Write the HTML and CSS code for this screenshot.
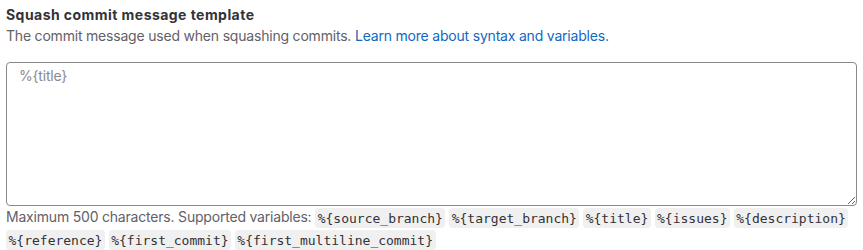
FILE: index.html
```html
<!DOCTYPE html>
<html lang="en">
<head>
    <meta charset="UTF-8">
    <title>Merge request settings</title>
    <link rel="stylesheet" href="styles.css">
</head>
<body>
    <div class="form-group">
        <label class="label-bold" for="squash-template">Squash commit message template</label>
        <p class="form-text">The commit message used when squashing commits. <a href="#">Learn more about syntax and variables.</a></p>
        <textarea id="squash-template" class="form-control" placeholder="%{title}"></textarea>
        <p class="help-text">
            Maximum 500 characters. Supported variables:
            <code>%{source_branch}</code>
            <code>%{target_branch}</code>
            <code>%{title}</code>
            <code>%{issues}</code>
            <code>%{description}</code>
            <code>%{reference}</code>
            <code>%{first_commit}</code>
            <code>%{first_multiline_commit}</code>
        </p>
    </div>
</body>
</html>
```

FILE: styles.css
```css
body {
    margin: 0;
    padding: 5px 6px 0 6px;
    background: #fff;
    color: #333238;
    font-family: Inter, "Noto Sans", sans-serif;
    font-size: 14px;
    letter-spacing: -0.2px;
}

.form-group {
    display: flex;
    flex-direction: column;
}

.label-bold {
    font-weight: 700;
    color: #333238;
    line-height: 20px;
    letter-spacing: 0.45px;
}

.form-text {
    margin: 0;
    color: #626168;
    line-height: 22px;
}

.form-text a {
    color: #1068bf;
    text-decoration: none;
}

.form-control {
    margin-top: 15px;
    height: 144px;
    box-sizing: border-box;
    border: 1px solid #89888d;
    border-radius: 4px;
    padding: 4px 12px 8px;
    font-family: inherit;
    font-size: 14px;
    letter-spacing: -0.2px;
    color: #333238;
    resize: vertical;
}

.form-control::placeholder {
    color: #89888d;
}

.help-text {
    margin: 0;
    color: #626168;
    line-height: 21px;
}

.help-text code {
    font-family: "DejaVu Sans Mono", monospace;
    font-size: 13px;
    letter-spacing: 0;
    white-space: nowrap;
    background: #f0f0f0;
    color: #333238;
    padding: 2.5px;
    border-radius: 4px;
}
```
